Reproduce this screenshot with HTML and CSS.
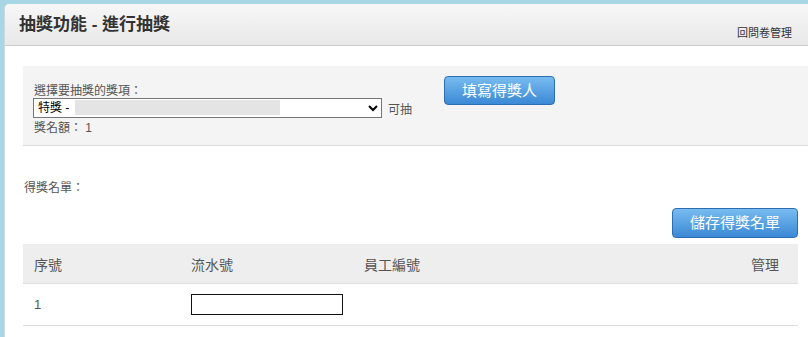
FILE: index.html
```html
<!DOCTYPE html>
<html lang="zh-Hant">
<head>
    <meta charset="UTF-8">
    <title>抽獎功能 - 進行抽獎</title>
    <link rel="stylesheet" href="styles.css">
</head>
<body>
    <div class="panel">
        <div class="panel-header">
            <h1>抽獎功能 - 進行抽獎</h1>
            <a class="back-link" href="#">回問卷管理</a>
        </div>
        <div class="panel-body">
            <div class="draw-box">
                <div class="prize-col">
                    <div class="field-label">選擇要抽獎的獎項：</div>
                    <div class="select-row">
                        <div class="select-wrap">
                            <select class="prize-select">
                                <option>特獎 -</option>
                            </select>
                            <span class="redacted"></span>
                        </div>
                        <span class="hint">可抽</span>
                    </div>
                    <div class="field-label quota">獎名額： 1</div>
                </div>
                <button class="btn-blue btn-fill">填寫得獎人</button>
            </div>

            <div class="winner-title">得獎名單：</div>
            <div class="toolbar">
                <button class="btn-blue btn-save">儲存得獎名單</button>
            </div>

            <table class="winner-table">
                <thead>
                    <tr>
                        <th class="col-no">序號</th>
                        <th class="col-serial">流水號</th>
                        <th>員工編號</th>
                        <th class="col-manage">管理</th>
                    </tr>
                </thead>
                <tbody>
                    <tr>
                        <td>1</td>
                        <td><input type="text" class="serial-input"></td>
                        <td></td>
                        <td></td>
                    </tr>
                </tbody>
            </table>
        </div>
    </div>
</body>
</html>
```

FILE: styles.css
```css
body {
    margin: 0;
    background-color: #a9d6e4;
    font-family: "Liberation Sans", "Noto Sans CJK TC", sans-serif;
    color: #555;
    overflow: hidden;
    height: 337px;
}

.panel {
    margin: 4px 0 0 4px;
    background-color: #ffffff;
    border-left: 1px solid #cfd8dc;
    border-top-left-radius: 5px;
    height: 340px;
}

.panel-header {
    display: flex;
    justify-content: space-between;
    height: 41px;
    padding: 0 16px 0 14px;
    background: linear-gradient(#f7f7f7, #e8e8e8);
    border-bottom: 1px solid #cdcdcd;
    border-top-left-radius: 5px;
}

.panel-header h1 {
    margin: 0;
    padding-top: 11px;
    font-size: 17px;
    line-height: 20px;
    font-weight: bold;
    color: #333;
}

.back-link {
    align-self: flex-end;
    margin-bottom: 5px;
    font-size: 11px;
    line-height: 14px;
    color: #333;
    text-decoration: none;
}

.panel-body {
    padding: 20px 0 0 18px;
}

.draw-box {
    display: flex;
    align-items: flex-start;
    padding: 10px 0 10px 11px;
    background-color: #f4f4f4;
    border-bottom: 1px solid #dcdcdc;
}

.prize-col {
    width: 410px;
    margin-top: 8px;
}

.field-label {
    font-size: 12px;
    line-height: 14px;
    color: #555;
}

.select-row {
    display: flex;
    align-items: center;
}

.select-wrap {
    position: relative;
}

.prize-select {
    display: block;
    width: 349px;
    height: 20px;
    margin: 0 0 0 -1px;
    padding: 0;
    border: 1px solid #767676;
    border-radius: 0;
    background-color: #fff;
    font-family: "Liberation Sans", "Noto Sans CJK TC", sans-serif;
    font-size: 12px;
    color: #000;
}

.redacted {
    position: absolute;
    left: 41px;
    top: 2px;
    width: 205px;
    height: 15px;
    background-color: #e4e4e4;
}

.hint {
    margin-left: 6px;
    font-size: 12px;
}

.quota {
    margin-top: 3px;
}

.btn-blue {
    background: linear-gradient(#78bcf0, #3b88d5);
    border: 1px solid #2d6eb2;
    border-radius: 4px;
    color: #fff;
    font-family: "Liberation Sans", "Noto Sans CJK TC", sans-serif;
    font-size: 15px;
    line-height: 18px;
    cursor: pointer;
}

.btn-fill {
    width: 111px;
    height: 29px;
}

.winner-title {
    margin-top: 35px;
    margin-left: 1px;
    font-size: 12px;
    line-height: 14px;
}

.toolbar {
    display: flex;
    justify-content: flex-end;
    width: 775px;
    margin-top: 13px;
}

.btn-save {
    width: 126px;
    height: 30px;
}

.winner-table {
    width: 775px;
    margin-top: 6px;
    border-collapse: collapse;
    font-size: 14px;
    color: #555;
}

.winner-table th {
    height: 39px;
    padding: 0;
    text-align: left;
    font-weight: normal;
    color: #555;
    background-color: #eeeeee;
    border-bottom: 1px solid #dddddd;
}

.winner-table td {
    height: 41px;
    padding: 0;
    font-size: 13px;
    color: #555;
    border-bottom: 1px solid #dddddd;
}

.winner-table th:first-child,
.winner-table td:first-child {
    padding-left: 11px;
}

.col-no {
    width: 157px;
}

.col-serial {
    width: 173px;
}

.winner-table .col-manage {
    text-align: right;
    padding-right: 19px;
}

.serial-input {
    display: block;
    width: 152px;
    height: 21px;
    box-sizing: border-box;
    margin: 0;
    border: 1px solid #111;
    padding: 0 3px;
    outline: none;
}
```
